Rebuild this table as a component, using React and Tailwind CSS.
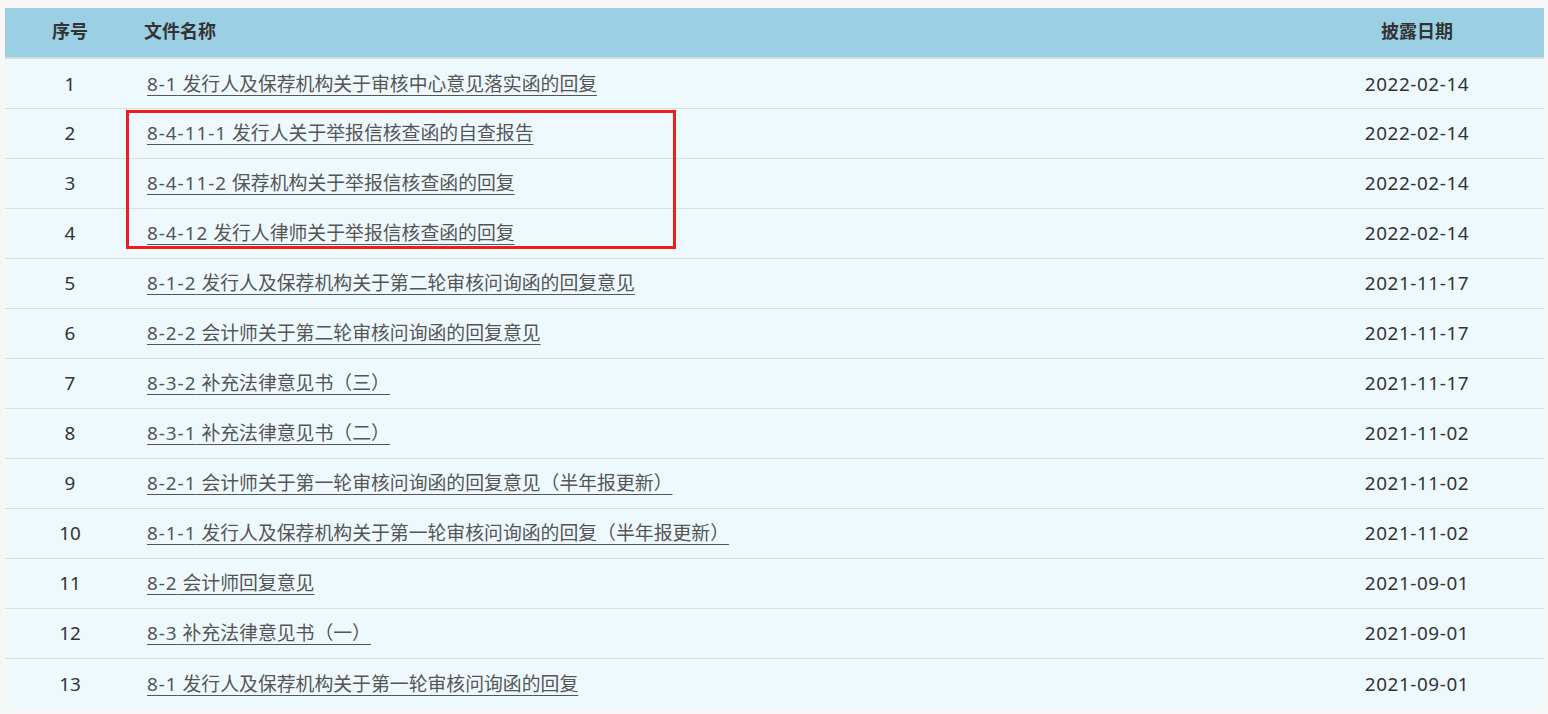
import React from "react";

const rows = [
  ["1", "8-1 发行人及保荐机构关于审核中心意见落实函的回复", "2022-02-14"],
  ["2", "8-4-11-1 发行人关于举报信核查函的自查报告", "2022-02-14"],
  ["3", "8-4-11-2 保荐机构关于举报信核查函的回复", "2022-02-14"],
  ["4", "8-4-12 发行人律师关于举报信核查函的回复", "2022-02-14"],
  ["5", "8-1-2 发行人及保荐机构关于第二轮审核问询函的回复意见", "2021-11-17"],
  ["6", "8-2-2 会计师关于第二轮审核问询函的回复意见", "2021-11-17"],
  ["7", "8-3-2 补充法律意见书（三）", "2021-11-17"],
  ["8", "8-3-1 补充法律意见书（二）", "2021-11-02"],
  ["9", "8-2-1 会计师关于第一轮审核问询函的回复意见（半年报更新）", "2021-11-02"],
  ["10", "8-1-1 发行人及保荐机构关于第一轮审核问询函的回复（半年报更新）", "2021-11-02"],
  ["11", "8-2 会计师回复意见", "2021-09-01"],
  ["12", "8-3 补充法律意见书（一）", "2021-09-01"],
  ["13", "8-1 发行人及保荐机构关于第一轮审核问询函的回复", "2021-09-01"],
];

export default function App() {
  return (
    <div
      className="min-h-[714px] w-[1548px] bg-[#f7f7f7] pt-[8px] pl-[5px] pr-[4px]"
      style={{ fontFamily: '"Noto Sans", "Noto Sans CJK SC", sans-serif' }}
    >
      <div className="relative">
        <table className="w-full border-collapse text-[18.85px]">
          <thead>
            <tr className="h-[50px] bg-[#9bcfe3] border-b-2 border-[#d6dbde] text-[18px]">
              <th className="w-[130px] text-center font-bold text-[#333] align-middle pb-[2px]">序号</th>
              <th className="text-left pl-[9px] font-bold text-[#333] align-middle pb-[2px]">文件名称</th>
              <th className="w-[254px] text-center font-bold text-[#333] align-middle pb-[2px]">披露日期</th>
            </tr>
          </thead>
          <tbody>
            {rows.map(([n, name, date], i) => {
              const sp = name.indexOf(" ");
              const prefix = name.slice(0, sp);
              const rest = name.slice(sp);
              return (
                <tr
                  key={n}
                  className={
                    "h-[50px] bg-[#eef9fe] " +
                    (i < rows.length - 1 ? "border-b border-[#dcdfe1]" : "")
                  }
                >
                  <td className="text-center text-[#333] align-middle pt-[1px]">{n}</td>
                  <td className="pl-[12px] align-middle pt-[1px]">
                    <a className="text-[#555] underline underline-offset-[4px] decoration-[1px] cursor-pointer">
                      <span className="tracking-[1px]">{prefix}</span>
                      {rest}
                    </a>
                  </td>
                  <td className="text-center text-[#333] align-middle tracking-[0.6px] pt-[1px]">{date}</td>
                </tr>
              );
            })}
          </tbody>
        </table>
        <div className="absolute left-[121px] top-[102px] w-[550px] h-[139px] border-[3px] border-[#f21c1c]" />
      </div>
    </div>
  );
}
